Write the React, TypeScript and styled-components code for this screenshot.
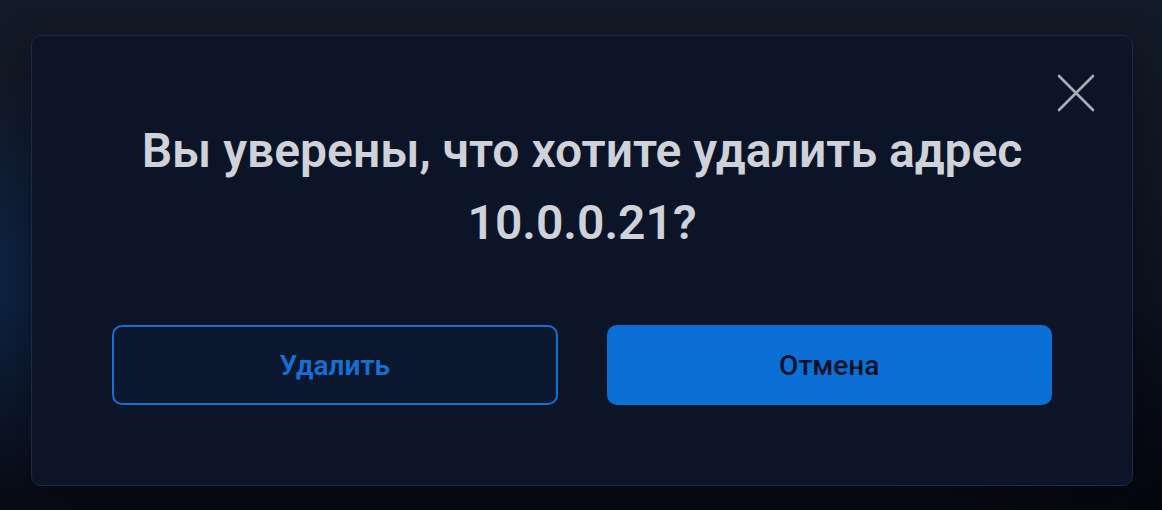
import styled, { createGlobalStyle } from "styled-components";

const GlobalStyle = createGlobalStyle`
  html, body {
    margin: 0;
    padding: 0;
    height: 100%;
  }
  body {
    font-family: Roboto, "Noto Sans", "Liberation Sans", sans-serif;
    background: #0c111c;
  }
  #root {
    height: 100%;
  }
`;

const Page = styled.div`
  width: 1162px;
  height: 510px;
  box-sizing: border-box;
  padding: 35px 29px 24px 31px;
  background:
    radial-gradient(ellipse 260px 300px at 0% 55%, rgba(14, 50, 96, 0.55), transparent 70%),
    radial-gradient(ellipse 400px 300px at 100% 100%, rgba(4, 6, 12, 0.8), transparent 70%),
    linear-gradient(180deg, #141b28 0%, #0d1220 60%, #080c16 100%);
`;

const Modal = styled.div`
  position: relative;
  box-sizing: border-box;
  width: 1102px;
  height: 451px;
  background: #0c1428;
  border: 1px solid #1c2a4a;
  border-radius: 10px;
  padding: 79px 80px 0;
  display: flex;
  flex-direction: column;
  align-items: center;
  box-shadow: 0 10px 40px rgba(0, 0, 0, 0.35);
`;

const CloseButton = styled.button`
  position: absolute;
  top: 37px;
  right: 36px;
  width: 40px;
  height: 40px;
  padding: 0;
  border: none;
  background: none;
  cursor: pointer;
  display: flex;
  align-items: center;
  justify-content: center;
`;

const Title = styled.h2`
  margin: 0;
  font-size: 48px;
  line-height: 72px;
  font-weight: 600;
  color: #cfd2d9;
  text-align: center;
`;

const Actions = styled.div`
  display: grid;
  grid-template-columns: 1fr 1fr;
  gap: 49px;
  width: 100%;
  margin-top: 66px;
`;

const Button = styled.button<{ $variant: "outline" | "solid" }>`
  height: 80px;
  border-radius: 10px;
  font-family: inherit;
  font-size: 28px;
  cursor: pointer;
  border: 2px solid #1670d4;
  background: ${(p) => (p.$variant === "solid" ? "#0b6fd6" : "#0c1830")};
  border-color: ${(p) => (p.$variant === "solid" ? "#0b6fd6" : "#1670d4")};
  color: ${(p) => (p.$variant === "solid" ? "#0a1226" : "#1670d4")};
  font-weight: ${(p) => (p.$variant === "solid" ? 500 : 600)};
`;

export default function App() {
  return (
    <>
      <GlobalStyle />
      <Page>
        <Modal>
          <CloseButton aria-label="Закрыть">
            <svg width="38" height="38" viewBox="0 0 38 38">
              <path
                d="M2 2L36 36M36 2L2 36"
                stroke="#a9adb5"
                strokeWidth="2.6"
                strokeLinecap="round"
              />
            </svg>
          </CloseButton>
          <Title>
            Вы уверены, что хотите удалить адрес
            <br />
            10.0.0.21?
          </Title>
          <Actions>
            <Button $variant="outline">Удалить</Button>
            <Button $variant="solid">Отмена</Button>
          </Actions>
        </Modal>
      </Page>
    </>
  );
}
